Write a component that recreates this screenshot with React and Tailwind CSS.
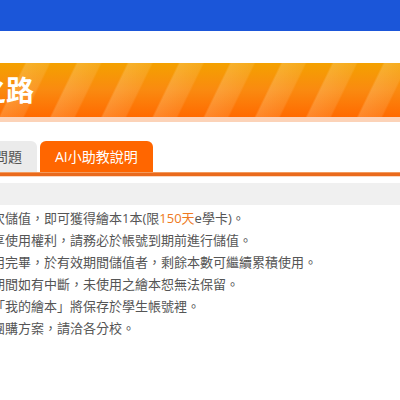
export default function App() {
  const lines = [
    <>次儲值，即可獲得繪本1本(限<span className="text-[#ee7a22]">150天</span>e學卡)。</>,
    <>享使用權利，請務必於帳號到期前進行儲值。</>,
    <>用完畢，於有效期間儲值者，剩餘本數可繼續累積使用。</>,
    <>期間如有中斷，未使用之繪本恕無法保留。</>,
    <>「我的繪本」將保存於學生帳號裡。</>,
    <>團購方案，請洽各分校。</>,
  ];

  return (
    <div className="w-[400px] h-[400px] overflow-hidden bg-white font-['Open_Sans','Noto_Sans_CJK_TC',sans-serif]">
      {/* top nav */}
      <div className="h-[31px] bg-[#1b56d9]" />
      <div className="h-[32px] bg-white" />

      {/* banner */}
      <div className="h-[54px] flex items-center bg-[repeating-linear-gradient(116deg,rgba(255,255,255,0)_0px,rgba(255,255,255,0)_22px,rgba(255,230,180,0.24)_24px,rgba(255,230,180,0.14)_44px,rgba(255,255,255,0)_46px),linear-gradient(180deg,#f4a100_0%,#fa8a10_50%,#ff6a00_100%)]">
        <h1 className="-ml-[22px] text-[28px] font-bold leading-none text-white">之路</h1>
      </div>
      <div className="h-[5px] bg-[#fcd3b8]" />

      {/* tabs */}
      <div className="mt-[19px] flex items-end gap-[3px] h-[31px] -ml-[49px]">
        <div className="h-[31px] px-[15px] flex items-center rounded-t-[6px] bg-[#ebebeb] text-[14px] text-[#555]">常見問題</div>
        <div className="h-[31px] px-[15px] flex items-center rounded-t-[6px] bg-[#ff6600] text-[14px] text-white">AI小助教說明</div>
      </div>
      <div className="h-[1px] bg-[#f39a5c]" />
      <div className="h-[3px] bg-[#ea6a1c]" />
      <div className="h-[1px] bg-[#fcd8c0]" />

      <div className="h-[6px]" />
      <div className="h-[22px] bg-[#f0f0f0]" />

      {/* content */}
      <div className="pt-[2px] -ml-[8px] text-[13px] leading-[22px] text-[#555]">
        {lines.map((l, i) => (
          <p key={i} className="whitespace-nowrap">{l}</p>
        ))}
      </div>
    </div>
  );
}
